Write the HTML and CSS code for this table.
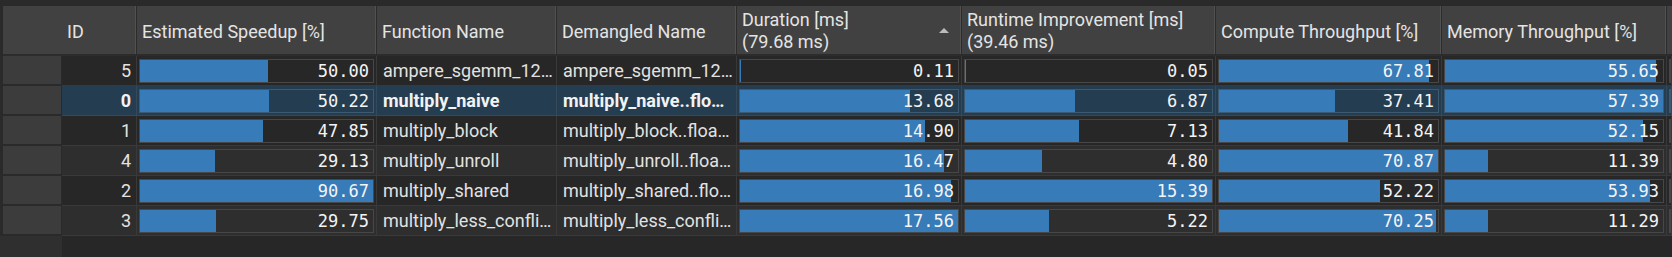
FILE: index.html
```html
<!DOCTYPE html>
<html>
<head>
<meta charset="utf-8">
<link rel="stylesheet" href="styles.css">
</head>
<body>
<div class="page">
  <div class="table">
    <div class="hcell corner"></div>
    <div class="hcell"><span>ID</span></div>
    <div class="hcell"><span>Estimated Speedup [%]</span></div>
    <div class="hcell"><span>Function Name</span></div>
    <div class="hcell"><span>Demangled Name</span></div>
    <div class="hcell"><span class="two">Duration [ms]<br>(79.68 ms)</span><i class="sort"></i></div>
    <div class="hcell"><span class="two">Runtime Improvement [ms]<br>(39.46 ms)</span></div>
    <div class="hcell"><span>Compute Throughput [%]</span></div>
    <div class="hcell"><span>Memory Throughput [%]</span></div>
    <div class="hcell last"></div>

    <!-- row 5 -->
    <div class="rh"></div>
    <div class="cell id dark">5</div>
    <div class="cell bar dark"><div class="box"><div class="fill" style="width:55.15%"></div><div class="val">50.00</div></div></div>
    <div class="cell txt dark">ampere_sgemm_12…</div>
    <div class="cell txt dark">ampere_sgemm_12…</div>
    <div class="cell bar dark"><div class="box"><div class="fill" style="width:0.63%"></div><div class="val">0.11</div></div></div>
    <div class="cell bar dark"><div class="box"><div class="fill" style="width:0.4%"></div><div class="val">0.05</div></div></div>
    <div class="cell bar dark"><div class="box"><div class="fill" style="width:95.68%"></div><div class="val">67.81</div></div></div>
    <div class="cell bar dark"><div class="box"><div class="fill" style="width:96.97%"></div><div class="val">55.65</div></div></div>
    <div class="cell bar dark"><div class="box"></div></div>

    <!-- row 0 (selected) -->
    <div class="rh"></div>
    <div class="cell id sel">0</div>
    <div class="cell bar sel"><div class="box"><div class="fill" style="width:55.39%"></div><div class="val">50.22</div></div></div>
    <div class="cell txt sel">multiply_naive</div>
    <div class="cell txt sel">multiply_naive..flo…</div>
    <div class="cell bar sel"><div class="box"><div class="fill" style="width:77.90%"></div><div class="val">13.68</div></div></div>
    <div class="cell bar sel"><div class="box"><div class="fill" style="width:44.64%"></div><div class="val">6.87</div></div></div>
    <div class="cell bar sel"><div class="box"><div class="fill" style="width:52.79%"></div><div class="val">37.41</div></div></div>
    <div class="cell bar sel"><div class="box"><div class="fill" style="width:100%"></div><div class="val">57.39</div></div></div>
    <div class="cell bar sel"><div class="box"></div></div>

    <!-- row 1 -->
    <div class="rh"></div>
    <div class="cell id dark">1</div>
    <div class="cell bar dark"><div class="box"><div class="fill" style="width:52.77%"></div><div class="val">47.85</div></div></div>
    <div class="cell txt dark">multiply_block</div>
    <div class="cell txt dark">multiply_block..floa…</div>
    <div class="cell bar dark"><div class="box"><div class="fill" style="width:84.85%"></div><div class="val">14.90</div></div></div>
    <div class="cell bar dark"><div class="box"><div class="fill" style="width:46.33%"></div><div class="val">7.13</div></div></div>
    <div class="cell bar dark"><div class="box"><div class="fill" style="width:59.04%"></div><div class="val">41.84</div></div></div>
    <div class="cell bar dark"><div class="box"><div class="fill" style="width:90.87%"></div><div class="val">52.15</div></div></div>
    <div class="cell bar dark"><div class="box"></div></div>

    <!-- row 4 -->
    <div class="rh"></div>
    <div class="cell id light">4</div>
    <div class="cell bar light"><div class="box"><div class="fill" style="width:32.13%"></div><div class="val">29.13</div></div></div>
    <div class="cell txt light">multiply_unroll</div>
    <div class="cell txt light">multiply_unroll..floa…</div>
    <div class="cell bar light"><div class="box"><div class="fill" style="width:93.79%"></div><div class="val">16.47</div></div></div>
    <div class="cell bar light"><div class="box"><div class="fill" style="width:31.19%"></div><div class="val">4.80</div></div></div>
    <div class="cell bar light"><div class="box"><div class="fill" style="width:100%"></div><div class="val">70.87</div></div></div>
    <div class="cell bar light"><div class="box"><div class="fill" style="width:19.85%"></div><div class="val">11.39</div></div></div>
    <div class="cell bar light"><div class="box"></div></div>

    <!-- row 2 -->
    <div class="rh"></div>
    <div class="cell id dark">2</div>
    <div class="cell bar dark"><div class="box"><div class="fill" style="width:100%"></div><div class="val">90.67</div></div></div>
    <div class="cell txt dark">multiply_shared</div>
    <div class="cell txt dark">multiply_shared..flo…</div>
    <div class="cell bar dark"><div class="box"><div class="fill" style="width:96.70%"></div><div class="val">16.98</div></div></div>
    <div class="cell bar dark"><div class="box"><div class="fill" style="width:100%"></div><div class="val">15.39</div></div></div>
    <div class="cell bar dark"><div class="box"><div class="fill" style="width:73.68%"></div><div class="val">52.22</div></div></div>
    <div class="cell bar dark"><div class="box"><div class="fill" style="width:93.97%"></div><div class="val">53.93</div></div></div>
    <div class="cell bar dark"><div class="box"></div></div>

    <!-- row 3 -->
    <div class="rh"></div>
    <div class="cell id light">3</div>
    <div class="cell bar light"><div class="box"><div class="fill" style="width:32.81%"></div><div class="val">29.75</div></div></div>
    <div class="cell txt light">multiply_less_confli…</div>
    <div class="cell txt light">multiply_less_confli…</div>
    <div class="cell bar light"><div class="box"><div class="fill" style="width:100%"></div><div class="val">17.56</div></div></div>
    <div class="cell bar light"><div class="box"><div class="fill" style="width:33.92%"></div><div class="val">5.22</div></div></div>
    <div class="cell bar light"><div class="box"><div class="fill" style="width:99.13%"></div><div class="val">70.25</div></div></div>
    <div class="cell bar light"><div class="box"><div class="fill" style="width:19.67%"></div><div class="val">11.29</div></div></div>
    <div class="cell bar light"><div class="box"></div></div>

    <div class="fill-left"></div>
    <div class="fill-right"></div>
  </div>
</div>
</body>
</html>
```

FILE: styles.css
```css
* { box-sizing: border-box; }
html, body {
  margin: 0;
  padding: 0;
  background: #2a2a2a;
  width: 1672px;
  height: 257px;
  overflow: hidden;
}
.page {
  width: 1672px;
  height: 257px;
  padding-top: 6px;
  display: flex;
  flex-direction: column;
}
.table {
  flex: 1;
  display: grid;
  grid-template-columns: 62px 75px 240px 180px 180px 225px 254px 226px 225px 5px;
  grid-template-rows: 50px repeat(6, 30px) 1fr;
  font-family: Roboto, "Noto Sans", sans-serif;
  font-size: 18px;
}
.hcell {
  background: #414141;
  color: #e4e4e4;
  display: flex;
  align-items: center;
  padding-left: 5px;
  padding-top: 3px;
  border-right: 1px solid #2c2c2c;
  border-bottom: 2px solid #2c2c2c;
  box-shadow: inset -1px 0 0 #515151;
  white-space: nowrap;
  overflow: hidden;
  min-width: 0;
}
.hcell.corner {
  margin-left: 3px;
  border-right: none;
  box-shadow: none;
}
.hcell.last { padding-left: 0; border-right: none; box-shadow: none; }
.hcell .two {
  line-height: 22px;
  margin-top: -1px;
}
.sort {
  margin-left: auto;
  margin-right: 12px;
  margin-top: -3px;
  width: 0;
  height: 0;
  border-left: 5px solid transparent;
  border-right: 5px solid transparent;
  border-bottom: 5px solid #bcbcbc;
}
.rh {
  margin-left: 3px;
  background: #3c3c3c;
  border-right: 1px solid #2a2a2a;
  border-bottom: 2px solid #2a2a2a;
}
.cell {
  border-right: 1px solid #393939;
  border-bottom: 1px solid #393939;
  color: #e2e2e2;
  min-width: 0;
}
.dark { background: #272727; }
.light { background: #2e2e2e; }
.sel { background: #243d50; border-color: #34495a; }
.id {
  text-align: right;
  padding-right: 5px;
  line-height: 29px;
}
.txt {
  padding-left: 6px;
  line-height: 29px;
  white-space: nowrap;
  overflow: hidden;
}
.sel.txt, .sel.id { font-weight: bold; color: #f2f2f2; }
.bar {
  padding: 3px 2px 2px 2px;
}
.box {
  height: 24px;
  border: 1px solid #474747;
  display: grid;
  grid-template-columns: 100%;
  grid-template-rows: 100%;
}
.sel .box { border-color: #3e5a70; }
.fill {
  grid-area: 1 / 1;
  background: #377bb8;
  height: 100%;
}
.val {
  grid-area: 1 / 1;
  text-align: right;
  padding-right: 4px;
  font-family: "DejaVu Sans Mono", "Liberation Mono", monospace;
  font-size: 17px;
  line-height: 22px;
  color: #f4f4f4;
  white-space: nowrap;
}
.fill-left {
  background: #2f2f2f;
}
.fill-right {
  grid-column: 2 / -1;
  background: #272727;
}
```
